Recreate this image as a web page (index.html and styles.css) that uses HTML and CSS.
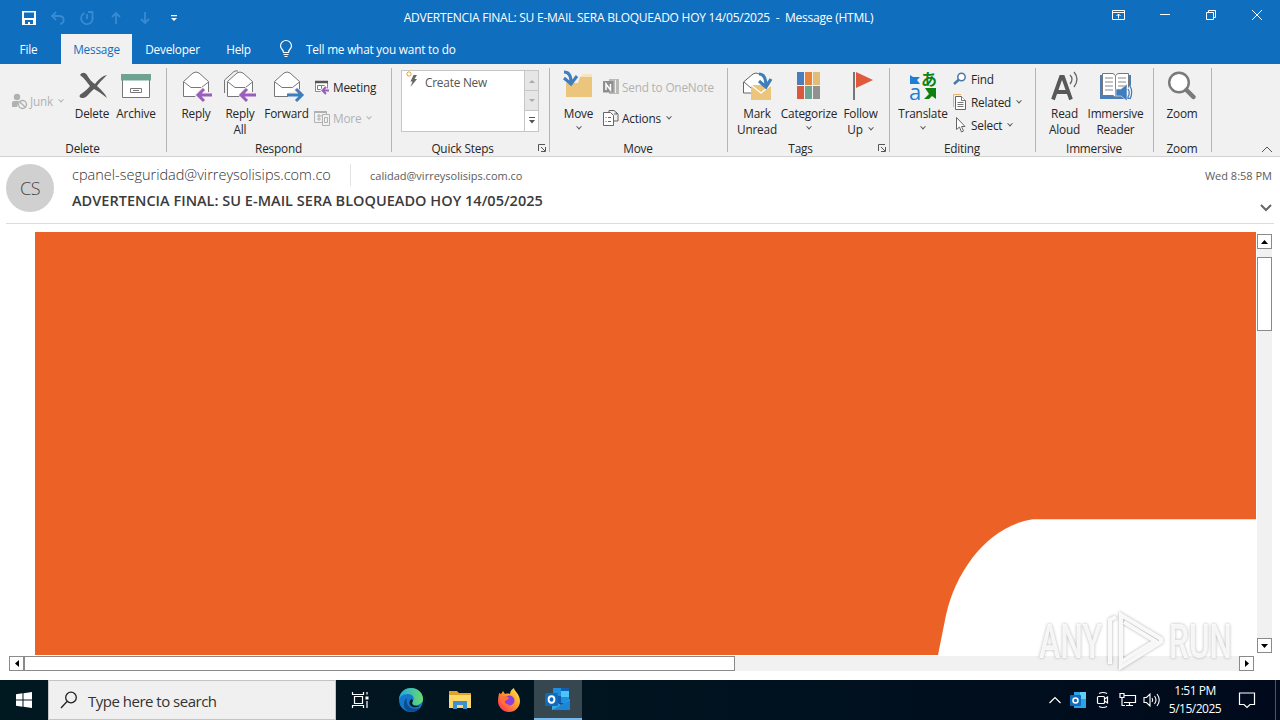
FILE: index.html
```html
<!DOCTYPE html>
<html lang="en">
<head>
    <meta charset="UTF-8">
    <meta name="viewport" content="width=device-width, initial-scale=1.0">
    <title>ADVERTENCIA FINAL: SU E-MAIL SERA BLOQUEADO HOY 14/05/2025 - Message (HTML)</title>
    <link rel="stylesheet" href="styles.css">
</head>
<body>
    <header class="titlebar">
        <div class="quick-access">
            <svg width="16" height="16" viewBox="0 0 16 16"><path d="M1 1h14v14H1z" fill="#fff"/><path d="M3 2.500h10V8H3zM4 10h8v4H9v-2H7v2H4z" fill="#106ebe"/></svg>
            <svg class="off" width="16" height="16" viewBox="0 0 16 16"><path d="M6 2L2 6l4 4M2 6h7c6 0 6 7 1 8"/></svg>
            <svg class="off" width="16" height="16" viewBox="0 0 16 16"><path d="M9 2h4.500v4.500M5.500 3A5.800 5.800 0 1 0 13 5.500M8 4v5"/></svg>
            <svg class="off" width="16" height="16" viewBox="0 0 16 16"><path d="M8 14V3M4 7l4-4 4 4"/></svg>
            <svg class="off" width="16" height="16" viewBox="0 0 16 16"><path d="M8 2v11M4 9l4 4 4-4"/></svg>
            <svg width="16" height="16" viewBox="0 0 16 16"><path d="M5 5h6v1.200H5zM5 8h6l-3 3z" fill="#fff"/></svg>
        </div>
        <div class="title">ADVERTENCIA FINAL: SU E-MAIL SERA BLOQUEADO HOY 14/05/2025 &nbsp;-&nbsp; Message (HTML)</div>
        <div class="window-buttons">
            <svg width="14" height="12" viewBox="0 0 14 12"><path d="M.5 1.500h12v9H.5zM.5 3.500h12M6.500 9.500V5M4.500 7l2-2 2 2"/></svg>
            <svg width="12" height="12" viewBox="0 0 12 12"><path d="M1 5.500h10"/></svg>
            <svg width="12" height="12" viewBox="0 0 12 12"><path d="M1.500 3.500h7v7h-7zM3.500 3V1.500h7v7H9"/></svg>
            <svg width="12" height="12" viewBox="0 0 12 12"><path d="M1 1l10 10M11 1L1 11"/></svg>
        </div>
    </header>

    <nav class="tabs">
        <span class="tab tab-file">File</span>
        <span class="tab tab-message active">Message</span>
        <span class="tab tab-developer">Developer</span>
        <span class="tab tab-help">Help</span>
        <svg class="bulb" width="14" height="18" viewBox="0 0 14 18" fill="none" stroke="#fff" stroke-width="1.200"><path d="M4.500 12.500c0-3-3-3.500-3-6.500a5.500 5.500 0 0 1 11 0c0 3-3 3.500-3 6.500zM4.500 14.500h5M5.500 16.500h3"/></svg>
        <span class="tell-me">Tell me what you want to do</span>
    </nav>

    <section class="ribbon">
        <div class="group g-delete">
            <div class="items">
                <div class="small-col junk">
                    <div class="small-btn disabled"><svg width="17" height="17" viewBox="0 0 17 17" fill="#b1b1b1"><circle cx="6" cy="4" r="3.200"/><path d="M1 14V9.500Q1 8 3 8h5l-2 6z"/><circle cx="11.500" cy="11.500" r="4" fill="#f1f1f1" stroke="#b1b1b1" stroke-width="1.400"/><path d="M9 9l5 5" stroke="#b1b1b1" stroke-width="1.400"/></svg><span>Junk</span><i class="caret"></i></div>
                </div>
                <div class="big-btn w44">
                    <svg width="32" height="32" viewBox="0 0 32 32"><path d="M3 5C5 2 8 2 10 5c3 5 5 7 8 9C21 10 25 6 30 5c-5 5-8 8-10 11 4 4 8 7 10 12-5-4-9-7-13-9-5 4-8 10-12 9-3 0-3-3-1-4 4-3 7-5 9-8C10 12 6 7 3 5z" fill="#5c5c5c" transform="translate(1 0)"/></svg>
                    <span>Delete</span>
                </div>
                <div class="big-btn w44">
                    <svg width="32" height="32" viewBox="0 0 32 32"><path d="M2.500 8h27v19.500h-27z" fill="#fff" stroke="#777"/><path d="M1 4h30v6.500H1z" fill="#6ea391"/><path d="M10.500 18.500h11v4h-11zM13 20.500h6" fill="none" stroke="#777"/></svg>
                    <span>Archive</span>
                </div>
            </div>
            <div class="group-label">Delete</div>
        </div>

        <div class="group g-respond">
            <div class="items">
                <div class="big-btn w44">
                    <svg width="32" height="32" viewBox="0 0 32 32"><path d="M3.500 11.500L13 3q3-2 6 0l9.500 8.500v15h-25z" fill="#fff" stroke="#777"/><path d="M4 12l7 5.500h10.500l7-5.500" fill="none" stroke="#777"/><path d="M31 25H19M24 19l-6 6 6 6" fill="none" stroke="#f1f1f1" stroke-width="6"/><path d="M32 25H19M24 19l-6 6 6 6" fill="none" stroke="#9b5dbb" stroke-width="3"/></svg>
                    <span>Reply</span>
                </div>
                <div class="big-btn w44">
                    <svg width="32" height="32" viewBox="0 0 32 32"><path d="M.5 23V10L10 1.500q2-1 4-.5" fill="none" stroke="#777"/><path d="M3.500 11.500L13 3q3-2 6 0l9.500 8.500v15h-25z" fill="#fff" stroke="#777"/><path d="M4 12l7 5.500h10.500l7-5.500" fill="none" stroke="#777"/><path d="M31 25H19M24 19l-6 6 6 6" fill="none" stroke="#f1f1f1" stroke-width="6"/><path d="M32 25H18M23 19l-6 6 6 6" fill="none" stroke="#9b5dbb" stroke-width="3"/></svg>
                    <span>Reply<br>All</span>
                </div>
                <div class="big-btn w49">
                    <svg width="32" height="32" viewBox="0 0 32 32"><path d="M3.500 11.500L13 3q3-2 6 0l9.500 8.500v15h-25z" fill="#fff" stroke="#777"/><path d="M4 12l7 5.500h10.500l7-5.500" fill="none" stroke="#777"/><path d="M17 25h12M24 19l6 6-6 6" fill="none" stroke="#f1f1f1" stroke-width="6"/><path d="M16 25h14M25 19l6 6-6 6" fill="none" stroke="#3f7dbd" stroke-width="3"/></svg>
                    <span>Forward</span>
                </div>
                <div class="small-col two">
                    <div class="small-btn"><svg width="16" height="16" viewBox="0 0 16 16" fill="none"><path d="M1.500 3.500h12v9h-12z" fill="#fff" stroke="#c07a50"/><path d="M1 3h13" stroke="#555" stroke-width="2.500"/><path d="M3.500 6.500h4v4h-4zM7.500 6.500h3v2" stroke="#b5694a"/><path d="M16 11.500H9M12 8l-3.500 3.500L12 15" stroke="#f1f1f1" stroke-width="4"/><path d="M15 11.500H9M12 8l-3.500 3.500L12 15" stroke="#9b5dbb" stroke-width="2"/></svg><span>Meeting</span></div>
                    <div class="small-btn disabled"><svg width="16" height="16" viewBox="0 0 16 16" fill="none" stroke="#b1b1b1"><path d="M.5 1.500h12v11H.5zM3 6h5M3 9h4M5 4v7"/><path d="M0 2h13" stroke-width="2"/><path d="M8.500 4.500h7v11h-7z" fill="#f1f1f1"/><path d="M10.500 7.500h3v5h-3z"/></svg><span>More</span><i class="caret"></i></div>
                </div>
            </div>
            <div class="group-label">Respond</div>
        </div>

        <div class="group g-quick">
            <div class="items">
                <div class="gallery">
                    <div class="gallery-list"><svg width="16" height="20" viewBox="0 0 16 20"><path d="M3 0v6M0 3h6M1 1l4 4M5 1L1 5" stroke="#e8a33d"/><circle cx="3" cy="3" r="1.200" fill="#fff"/><path d="M7.500 4H11L8.500 8H11L4.500 16l2-5.500H4.500z" fill="#666"/></svg><span>Create New</span></div>
                    <div class="gallery-scroll">
                        <div class="gs off-btn"><svg width="6" height="4"><path d="M0 4l3-3 3 3z" fill="#aaa"/></svg></div>
                        <div class="gs off-btn"><svg width="6" height="4"><path d="M0 0h6L3 3z" fill="#aaa"/></svg></div>
                        <div class="gs"><svg width="8" height="8"><path d="M1 0h6v1H1zM1 3h6L4 6.500z" fill="#555"/></svg></div>
                    </div>
                </div>
            </div>
            <div class="group-label">Quick Steps<svg class="launcher" width="8" height="8"><path d="M.5 7V.5H7M3 3l4 4M7.500 3v4.500H3" fill="none" stroke="#555"/></svg></div>
        </div>

        <div class="group g-move">
            <div class="items">
                <div class="big-btn w37">
                    <svg width="32" height="32" viewBox="0 0 32 32"><path d="M3 13h12l2-6h12v20H3z" fill="#ecc57c"/><path d="M17 7l3-3h9v3z" fill="#f7e3bd"/><path d="M1 2q7 0 7 10M1 8l7 6 6-8" fill="none" stroke="#3f7dbd" stroke-width="3"/></svg>
                    <span>Move</span><i class="caret"></i>
                </div>
                <div class="small-col two">
                    <div class="small-btn disabled"><svg width="16" height="16" viewBox="0 0 16 16"><path d="M6 0h10v15H6z" fill="#bababa"/><path d="M0 2h10.500v11.500H0z" fill="#8f8f8f"/><path d="M3 11V5l4.500 6V5" fill="none" stroke="#fff" stroke-width="1.500"/><path d="M12.500 1v13" stroke="#eee"/></svg><span>Send to OneNote</span></div>
                    <div class="small-btn"><svg width="16" height="16" viewBox="0 0 16 16" fill="#fff" stroke="#666"><path d="M.5 2.500h7l3 3v10H.5z"/><path d="M2.500 7.500h1M2.500 11.500h1M5 7.500h3M5 11.500h3" /><path d="M6 2V.5h5l4 3.500v7h-4M11 4h3l-1-2" fill="none"/></svg><span>Actions</span><i class="caret"></i></div>
                </div>
            </div>
            <div class="group-label">Move</div>
        </div>

        <div class="group g-tags">
            <div class="items">
                <div class="big-btn w44">
                    <svg width="32" height="32" viewBox="0 0 32 32"><path d="M2.500 12L12 4q3-2 6 0l9 7v12H2.500z" fill="#fff"/><path d="M10 23H2.500V12L12 4q3-2 6 0M3 12l7 6" fill="none" stroke="#666"/><path d="M10 15h20v15H10z" fill="#ecc57c"/><path d="M10 15l10 8 10-8" fill="none" stroke="#fff" stroke-width="1.300"/><path d="M18 4q7 0 7 12M18 11l7 6 5-8" fill="none" stroke="#3f7dbd" stroke-width="3.200"/></svg>
                    <span>Mark<br>Unread</span>
                </div>
                <div class="big-btn w60">
                    <svg width="32" height="32" viewBox="0 0 32 32"><path d="M4 2h7v13H4z" fill="#4a7ebb"/><path d="M12 2h7v13h-7z" fill="#e8833a"/><path d="M20 2h7v13h-7z" fill="#e3bd78"/><path d="M4 16h7v13H4z" fill="#d9593f"/><path d="M12 16h7v13h-7z" fill="#6ea391"/><path d="M20 16h7v13h-7z" fill="#919191"/></svg>
                    <span>Categorize</span><i class="caret"></i>
                </div>
                <div class="big-btn w43">
                    <svg width="32" height="32" viewBox="0 0 32 32"><path d="M9 2v28" stroke="#777" stroke-width="2"/><path d="M11 2l17 8-17 8z" fill="#e0593d"/></svg>
                    <span>Follow<br>Up <i class="caret inline"></i></span>
                </div>
            </div>
            <div class="group-label">Tags<svg class="launcher" width="8" height="8"><path d="M.5 7V.5H7M3 3l4 4M7.500 3v4.500H3" fill="none" stroke="#555"/></svg></div>
        </div>

        <div class="group g-editing">
            <div class="items">
                <div class="big-btn w50">
                    <svg width="32" height="32" viewBox="0 0 32 32"><path d="M3 5l3 2h7l-3 3 3 4H3z" fill="#1a7fd6"/><path d="M18 18h11v11l-4-3-3 3h-5l5-5z" fill="#108010"/><text x="2" y="29.500" class="glyph-a">a</text><text x="14" y="15" class="glyph-jp">あ</text></svg>
                    <span>Translate</span><i class="caret"></i>
                </div>
                <div class="small-col three">
                    <div class="small-btn"><svg width="16" height="16" viewBox="0 0 16 16" fill="#fff" stroke="#4a78a8"><circle cx="9.500" cy="6" r="3.700" stroke-width="1.500"/><path d="M7 8.500l-5 4.500" stroke-width="2.500"/></svg><span>Find</span></div>
                    <div class="small-btn"><svg width="16" height="16" viewBox="0 0 16 16" fill="#fff"><path d="M1.500 13V.5H9" stroke="#e8b46a" fill="none"/><path d="M3.500 2.500h6l4 4v9h-10z" stroke="#666"/><path d="M9.500 2.500v4h4M5.500 8.500h6M5.500 10.500h6M5.500 12.500h6" stroke="#777"/></svg><span>Related</span><i class="caret"></i></div>
                    <div class="small-btn"><svg width="16" height="16" viewBox="0 0 16 16" fill="#fff" stroke="#666"><path d="M4.500 .5v12l3-2.500 2 5 2-1-2-4.500h3.500z"/></svg><span>Select</span><i class="caret"></i></div>
                </div>
            </div>
            <div class="group-label">Editing</div>
        </div>

        <div class="group g-immersive">
            <div class="items">
                <div class="big-btn w43">
                    <svg width="32" height="32" viewBox="0 0 32 32" fill="none"><path d="M4 29.500L12 7h2l8 22.500M8 22h11" stroke="#585858" stroke-width="3.800"/><path d="M21 5q4 4 0 9M25 2q6 7 0 15" stroke="#666" stroke-width="1.300"/></svg>
                    <span>Read<br>Aloud</span>
                </div>
                <div class="big-btn w59">
                    <svg width="32" height="32" viewBox="0 0 32 32"><path d="M0 5h31v24H0z" fill="#4a7ebb"/><path d="M2.500 3.500H13l2.500 2 2.500-2h10.500v22H18l-2.500 2-2.500-2H2.500z" fill="#fff" stroke="#777"/><path d="M15.500 6v21M5 8h8M5 12h8M5 16h8M5 20h8M18 8h8M18 12h8M18 16h8" stroke="#888"/><path d="M16 19h5l6-5v17l-6-5h-5z" fill="#3f7dbd" stroke="#f1f1f1" stroke-width=".6"/><path d="M28 18q3 4 0 9M30 16q3.500 6 0 12" fill="none" stroke="#f1f1f1" stroke-width="3"/><path d="M28 19q2.500 4 0 8M30 16q3.500 6 0 13" fill="none" stroke="#3f7dbd" stroke-width="1.200"/></svg>
                    <span>Immersive<br>Reader</span>
                </div>
            </div>
            <div class="group-label">Immersive</div>
        </div>

        <div class="group g-zoom">
            <div class="items">
                <div class="big-btn w44">
                    <svg width="32" height="32" viewBox="0 0 32 32"><circle cx="13" cy="12.500" r="9.800" fill="#fff" stroke="#7a7a7a" stroke-width="2.400"/><path d="M20.500 20l7 7" stroke="#7a7a7a" stroke-width="4.500" stroke-linecap="round"/></svg>
                    <span>Zoom</span>
                </div>
            </div>
            <div class="group-label">Zoom</div>
        </div>
        <svg class="collapse" width="12" height="7"><path d="M1 6l5-5 5 5" fill="none" stroke="#555"/></svg>
    </section>

    <section class="mail-header">
        <div class="avatar">CS</div>
        <div class="mail-meta">
            <div class="mail-people">
                <span class="from">cpanel-seguridad@virreysolisips.com.co</span>
                <span class="to">calidad@virreysolisips.com.co</span>
            </div>
            <div class="subject">ADVERTENCIA FINAL: SU E-MAIL SERA BLOQUEADO HOY 14/05/2025</div>
        </div>
        <div class="mail-side">
            <span class="date">Wed 8:58 PM</span>
            <svg width="12" height="8"><path d="M1 1l5 5 5-5" fill="none" stroke="#666" stroke-width="2"/></svg>
        </div>
    </section>

    <main class="mail-body">
        <svg class="banner" width="1221" height="423" viewBox="0 0 1221 423"><path d="M0 0h1221v423H0z" fill="#eb6126"/><path d="M1221 287.300H998C955 293 921 337 911 383L903 423h318z" fill="#fff"/></svg>
        <div class="scroll-v">
            <div class="scroll-btn"><svg width="7" height="4"><path d="M0 4l3.500-4L7 4z"/></svg></div>
            <div class="thumb-v"></div>
            <div class="scroll-btn last"><svg width="7" height="4"><path d="M0 0h7L3.500 4z"/></svg></div>
        </div>
    </main>
    <div class="scroll-h">
        <div class="scroll-btn"><svg width="4" height="7"><path d="M4 0v7L0 3.500z"/></svg></div>
        <div class="thumb-h"></div>
        <div class="scroll-btn last"><svg width="4" height="7"><path d="M0 0v7l4-3.500z"/></svg></div>
    </div>

    <svg class="watermark" width="204" height="70" viewBox="0 0 204 70">
        <g class="wm">
            <text x="5" y="52" textLength="63" lengthAdjust="spacingAndGlyphs">ANY</text>
            <text x="135" y="52" textLength="63" lengthAdjust="spacingAndGlyphs">RUN</text>
            <path d="M76 58V14l6-3" class="wm-line"/>
            <path d="M87 58V9l40 24v3L87 61v-5l34-21L90 16" class="wm-line"/>
        </g>
    </svg>

    <footer class="taskbar">
        <div class="start"><svg width="16" height="16" viewBox="0 0 16 16" fill="#fff"><path d="M0 2.200L6.500 1.300v6.200H0zM7.500 1.200L16 0v7.500H7.500zM0 8.500h6.500v6.200L0 13.800zM7.500 8.500H16V16l-8.500-1.200z"/></svg></div>
        <div class="search"><svg width="18" height="18" viewBox="0 0 18 18" fill="none" stroke="#222" stroke-width="1.300"><circle cx="11" cy="6.500" r="5.300"/><path d="M7 10.500L1 17"/></svg><span>Type here to search</span></div>
        <div class="task-item t-view"><svg width="18" height="18" viewBox="0 0 18 18" fill="none" stroke="#fff" stroke-width="1.200"><path d="M3.500 5.500h8v7h-8zM1.500 1v2.500h11V1M1.500 17v-2.500h11V17M16 1v2.500M16 10v7"/><path d="M14.500 5.500h3v3h-3z" fill="#fff" stroke="none"/></svg></div>
        <div class="task-item"><svg width="26" height="26" viewBox="0 0 26 26">
            <defs>
                <linearGradient id="edgeTop" x1="0" x2="1"><stop offset="0" stop-color="#24a5df"/><stop offset="1" stop-color="#67dd68"/></linearGradient>
                <linearGradient id="fox" x1="1" y1="0" x2="0" y2="1"><stop offset="0" stop-color="#fff14a"/><stop offset=".45" stop-color="#ff9a2e"/><stop offset="1" stop-color="#ff2058"/></linearGradient>
            </defs>
            <circle cx="13" cy="13" r="12" fill="#1378cb"/><path d="M1 12C2 4 8 1 13 1c8 0 12 6 12 11 0 4-4 6-7 6-4 0-5-2-3-4 2-3 0-7-5-7-5 0-8 3-9 5z" fill="url(#edgeTop)"/><path d="M9 11c-2 7 4 13 13 10-5 6-17 5-16-4 0-3 1-5 3-6z" fill="#0b4d91"/><path d="M15 14c-2 3 0 5 4 5 3 0 5-1 6-3-2 3-8 6-12 3-3-3-1-7 1-7z" fill="#061b25"/></svg></div>
        <div class="task-item"><svg width="22" height="20" viewBox="0 0 22 20"><path d="M0 1h8l2 2h12v15H0z" fill="#e2a228"/><path d="M0 5h22v13H0z" fill="#ffd768"/><path d="M4 19v-8h14v8h-4v-4H8v4z" fill="#3c8fd0"/></svg></div>
        <div class="task-item"><svg width="24" height="24" viewBox="0 0 24 24"><path d="M2 5l2 1 2-3 2 3c3-1 5 0 5 0 0-3 2-5 4-6 0 3 6 6 6 13A11 11 0 0 1 1 13C1 9 2 7 2 5z" fill="url(#fox)"/><circle cx="12.500" cy="12.500" r="5" fill="#8a3fe0"/><path d="M4 9c3-2 6-1 8 1-1 2-3 2-4 3-1 1 1 4 4 3-4 4-9 0-8-7z" fill="#ff7139"/></svg></div>
        <div class="task-item active"><svg width="26" height="24" viewBox="0 0 26 24"><path d="M8 1h16v15H8z" fill="#0f5fae"/><path d="M8 1h8v8H8zM16 9h8v7h-8z" fill="#1d8fe0"/><path d="M16 4h8v6h-8z" fill="#4fc3f5"/><path d="M7 12l9 6 9-6v11H7z" fill="#39a8e8"/><path d="M7 23l18-10v10z" fill="#1a86d6"/><rect y="6" width="13" height="13" rx="1.500" fill="#0f6cbd"/><ellipse cx="6.500" cy="12.500" rx="2.900" ry="3.200" fill="none" stroke="#fff" stroke-width="1.900"/></svg></div>
        <div class="tray">
            <svg width="14" height="8" viewBox="0 0 14 8" fill="none" stroke="#fff" stroke-width="1.200"><path d="M1.500 7L7 1.500 12.500 7"/></svg>
            <svg width="16" height="16" viewBox="0 0 16 16"><path d="M4 0h12v16H4z" fill="#2aa3e8"/><path d="M10 0h6v7h-6z" fill="#61cff7"/><rect y="3" width="11" height="11" rx="1" fill="#0f6cbd"/><circle cx="5.500" cy="8.500" r="2.500" fill="none" stroke="#fff" stroke-width="1.500"/></svg>
            <svg width="14" height="16" viewBox="0 0 14 16" fill="none" stroke="#fff" stroke-width="1.200"><rect x="1.500" y="4.500" width="7" height="7" rx="1"/><path d="M8.500 7l3-2v6l-3-2M3 1.500q4-2 8 0M3 14.500q4 2 8 0"/></svg>
            <svg width="18" height="16" viewBox="0 0 18 16" fill="none" stroke="#fff" stroke-width="1.200"><path d="M5 3.500h11.500v7H5M10.500 10.500v3M7 13.500h7M1 1.500h4v4H1zM3 5.500v8h3"/></svg>
            <svg width="18" height="16" viewBox="0 0 18 16" fill="none" stroke="#fff" stroke-width="1.100"><path d="M1 5.500h2.500L7 2v12l-3.500-3.500H1zM9 6q1.500 2 0 4M11.500 4q3 4 0 8M14 2q4.500 6 0 12"/></svg>
        </div>
        <div class="clock"><div>1:51 PM</div><div>5/15/2025</div></div>
        <svg class="notify" width="18" height="18" viewBox="0 0 18 18" fill="none" stroke="#fff" stroke-width="1.200"><path d="M1.500 2h15v11.500H12L9 16.500l-3-3H1.500z"/></svg>
        <div class="show-desktop"></div>
    </footer>
</body>
</html>
```
FILE: styles.css
```css
* {
    margin: 0;
    padding: 0;
    box-sizing: border-box;
}

body {
    width: 1280px;
    height: 720px;
    overflow: hidden;
    position: relative;
    background: #fff;
    color: #262626;
    font-family: "Open Sans", "Noto Sans", sans-serif;
    font-size: 11.8px;
    letter-spacing: -0.2px;
    line-height: 16px;
    white-space: nowrap;
}

svg {
    display: block;
    flex-shrink: 0;
    overflow: visible;
}

/* Title bar */
.titlebar {
    display: grid;
    grid-template-columns: 300px 1fr 300px;
    height: 34px;
    background: #106ebe;
    color: #fff;
}

.quick-access {
    display: flex;
    align-items: center;
    gap: 13px;
    padding-left: 21px;
}

.quick-access svg {
    margin-top: -1px;
}

.off {
    fill: none;
    stroke: #388bd3;
    stroke-width: 1.8;
}

.title {
    padding-right: 3px;
    text-align: center;
    line-height: 36px;
    font-size: 12px;
    letter-spacing: -0.24px;
}

.window-buttons {
    display: flex;
    justify-content: flex-end;
    padding-top: 9px;
}

.window-buttons svg {
    margin: 0 17px;
    fill: none;
    stroke: #fff;
}

.window-buttons svg:first-child {
    margin: 0 16px;
}

/* Tabs */
.tabs {
    display: flex;
    align-items: center;
    height: 30px;
    background: #106ebe;
    color: #fff;
}

.tab {
    height: 30px;
    line-height: 30px;
    text-align: center;
}

.tab-file {
    width: 57px;
    margin-right: 4px;
}

.tab-message {
    width: 71px;
}

.tab-developer {
    width: 81px;
}

.tab-help {
    width: 51px;
}

.tab.active {
    background: #f1f1f1;
    color: #106ebe;
}

.bulb {
    margin-left: 15px;
}

.tell-me {
    margin-left: 13px;
    line-height: 30px;
}

/* Ribbon */
.ribbon {
    display: flex;
    height: 93px;
    background: #f1f1f1;
    border-bottom: 1px solid #d2d2d2;
}

.group {
    display: flex;
    flex-direction: column;
    position: relative;
}

.group::after {
    content: "";
    position: absolute;
    right: 0;
    top: 4px;
    width: 1px;
    height: 84px;
    background: #b5b5b5;
}

.g-delete { width: 167px; }
.g-respond { width: 225px; }
.g-quick { width: 158px; }
.g-move { width: 178px; }
.g-tags { width: 162px; }
.g-editing { width: 146px; }
.g-immersive { width: 118px; }
.g-zoom { width: 58px; }

.items {
    display: flex;
    height: 76px;
    padding: 6px 0 0 7px;
}

.g-delete .items { padding-left: 10px; }
.g-quick .items { padding-left: 9px; }
.g-move .items { padding-left: 10px; }
.g-editing .items { padding-left: 8px; }
.g-zoom .items { padding-left: 6px; }

.group-label {
    display: flex;
    align-items: center;
    justify-content: center;
    height: 16px;
    padding-right: 2px;
    position: relative;
}

.g-quick .group-label,
.g-tags .group-label {
    padding-right: 17px;
}

.launcher {
    position: absolute;
    right: 4px;
    top: 4px;
}

.big-btn {
    display: flex;
    flex-direction: column;
    align-items: center;
    text-align: center;
}

.big-btn > span {
    margin-top: 3px;
}

.big-btn > .caret {
    margin-top: 5px;
}

.w37 { width: 37px; }
.w43 { width: 43px; }
.w44 { width: 44px; }
.w49 { width: 49px; }
.w50 { width: 50px; }
.w59 { width: 59px; }
.w60 { width: 60px; }

.caret {
    display: inline-block;
    width: 4px;
    height: 4px;
    border-right: 1px solid #555;
    border-bottom: 1px solid #555;
    transform: rotate(45deg) translate(-1px, -1px);
}

.caret.inline {
    margin: 0 1px 3px 3px;
}

.small-col {
    display: flex;
    flex-direction: column;
}

.small-btn {
    display: flex;
    align-items: center;
    height: 16px;
}

.small-btn span {
    margin-left: 3px;
}

.small-btn .caret {
    margin-left: 6px;
}

.small-col.junk {
    width: 60px;
    padding: 23px 0 0 1px;
}

.junk .small-btn span {
    margin-left: 2px;
}

.small-col.two {
    padding: 9px 0 0 3px;
    gap: 15px;
}

.g-move .small-col.two {
    padding-left: 6px;
}

.small-col.three {
    padding: 1px 0 0 4px;
    gap: 7px;
}

.disabled {
    color: #b1b1b1;
}

.disabled .caret {
    border-color: #b1b1b1;
}

.gallery {
    display: flex;
    width: 138px;
    height: 62px;
    background: #fff;
    border: 1px solid #c6c6c6;
}

.gallery-list {
    display: flex;
    flex: 1;
    padding-left: 4px;
    color: #555;
}

.gallery-list span {
    margin-left: 3px;
    line-height: 22px;
}

.gallery-scroll {
    width: 14px;
    border-left: 1px solid #c6c6c6;
}

.gs {
    display: flex;
    align-items: center;
    justify-content: center;
    height: 20px;
}

.off-btn {
    background: #e6e6e6;
    border-bottom: 1px solid #c6c6c6;
}

.glyph-a {
    font: 22px "Open Sans", sans-serif;
    fill: #1a7fd6;
}

.glyph-jp {
    font: bold 16px "Noto Sans CJK JP", sans-serif;
    fill: #108010;
}

.collapse {
    margin: 82px 0 0 49px;
}

/* Message header */
.mail-header {
    display: flex;
    height: 67px;
    margin: 0 6px;
    border-bottom: 1px solid #dcdcdc;
}

.avatar {
    width: 48px;
    height: 48px;
    margin-top: 7px;
    border-radius: 50%;
    background: #d0d0d0;
    color: #444;
    font-size: 18px;
    font-weight: 300;
    line-height: 49px;
    text-align: center;
    letter-spacing: -0.5px;
}

.mail-meta {
    flex: 1;
    margin-left: 18px;
}

.mail-people {
    display: flex;
    align-items: center;
    height: 22px;
    margin-top: 7px;
    color: #5c5c5c;
}

.from {
    width: 279px;
    font-size: 14.5px;
    font-weight: 300;
    color: #333;
    letter-spacing: 0;
    line-height: 22px;
    border-right: 1px solid #e3e3e3;
}

.to {
    margin: 2px 0 0 19px;
    font-size: 11px;
    letter-spacing: 0;
}

.subject {
    margin-top: 4px;
    font-size: 14.5px;
    font-weight: 600;
    letter-spacing: 0.02px;
    line-height: 22px;
    color: #3b3b3b;
}

.mail-side {
    display: flex;
    flex-direction: column;
    align-items: flex-end;
    padding: 11px 2px 0 0;
}

.mail-side svg {
    margin: 20px 0 0 0;
}

.date {
    font-size: 11px;
    letter-spacing: 0;
    color: #5c5c5c;
}

/* Message body */
.mail-body {
    display: flex;
    height: 423px;
    margin-top: 8px;
    padding-left: 35px;
}

.scroll-v {
    display: flex;
    flex-direction: column;
    width: 15px;
    height: 419px;
    margin: 2px 0 0 1px;
    background: #f1f1f1;
}

.scroll-btn {
    display: flex;
    align-items: center;
    justify-content: center;
    width: 15px;
    height: 15px;
    background: #fff;
    border: 1px solid #8a8a8a;
}

.thumb-v {
    height: 74px;
    margin-top: 8px;
    background: #fff;
    border: 1px solid #8a8a8a;
}

.scroll-v .last {
    margin-top: auto;
}

.scroll-h {
    display: flex;
    width: 1245px;
    height: 15px;
    margin: 1px 0 0 9px;
    background: #f1f1f1;
}

.thumb-h {
    width: 711px;
    background: #fff;
    border: 1px solid #8a8a8a;
}

.scroll-h .last {
    margin-left: auto;
}

.watermark {
    position: absolute;
    left: 1034px;
    top: 606px;
    filter: drop-shadow(0 0 1.5px rgba(0, 0, 0, 0.35));
}

.wm {
    fill: rgba(255, 255, 255, 0.85);
    font: 500 49px "Roboto", sans-serif;
    letter-spacing: 0;
}

.wm-line {
    fill: none;
    stroke: rgba(255, 255, 255, 0.9);
    stroke-width: 4;
}

/* Taskbar */
.taskbar {
    display: flex;
    align-items: center;
    height: 40px;
    margin-top: 9px;
    background: linear-gradient(90deg, #001820, #001420 50%, #000a1c);
    color: #fff;
}

.start {
    display: flex;
    justify-content: center;
    width: 48px;
}

.search {
    display: flex;
    align-items: center;
    width: 288px;
    height: 40px;
    padding-left: 11px;
    background: #f0f0f0;
    border: 1px solid #c4c4c4;
    color: #333;
    font-size: 15px;
    letter-spacing: -0.5px;
}

.search span {
    margin: 1px 0 0 10px;
}

.task-item {
    display: flex;
    align-items: center;
    justify-content: center;
    width: 49px;
    height: 40px;
}

.task-item.t-view {
    width: 50px;
    padding-right: 3px;
}

.task-item.active {
    width: 48px;
    margin-left: 1px;
    background: #37474f;
    border-bottom: 2px solid #76b9ed;
}

.tray {
    display: flex;
    align-items: center;
    gap: 8px;
    margin-left: auto;
}

.tray svg:nth-child(3) {
    margin: 0 1px 0 2px;
}

.tray svg:nth-child(4) {
    margin-right: -2px;
}

.clock {
    width: 60px;
    margin-left: 4px;
    font-size: 12px;
    line-height: 18px;
    text-align: center;
    letter-spacing: -0.5px;
}

.notify {
    margin: 0 19px 0 13px;
}

.show-desktop {
    width: 5px;
    height: 40px;
    border-left: 1px solid #4c5563;
}
```
